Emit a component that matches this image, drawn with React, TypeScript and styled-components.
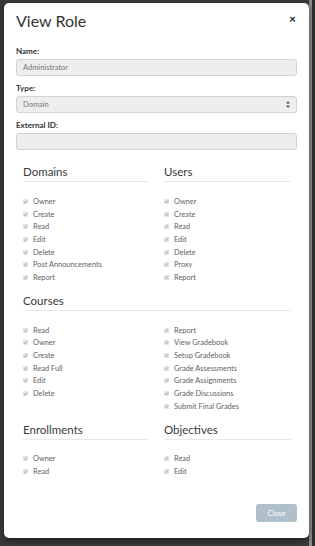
import React from "react";
import styled, { createGlobalStyle } from "styled-components";

const Global = createGlobalStyle`
  html, body { margin: 0; padding: 0; }
  body {
    background: #3a3a3a;
    font-family: Lato, "Noto Sans", sans-serif;
    width: 315px;
    height: 546px;
    overflow: hidden;
  }
`;

const Backdrop = styled.div`
  position: relative;
  width: 315px;
  height: 546px;
  box-sizing: border-box;
  padding: 3px 0 0 4px;
  background: linear-gradient(to right, #3a3a3a 0, #3a3a3a 309px, #8a8a92 309px, #8a8a92 312px, #2f2f2f 312px);
`;

const Modal = styled.div`
  width: 305px;
  height: 535px;
  box-sizing: border-box;
  background: #fff;
  border-radius: 5px;
  padding: 0 12px 16px;
  display: flex;
  flex-direction: column;
  box-shadow: 0 2px 6px rgba(0, 0, 0, 0.5);
`;

const Header = styled.div`
  display: flex;
  justify-content: space-between;
  align-items: flex-start;
  padding-top: 8px;
`;

const Title = styled.h1`
  margin: 0;
  font-size: 16px;
  line-height: 20px;
  font-weight: 400;
  color: #333;
`;

const CloseX = styled.span`
  font-size: 12px;
  font-weight: 900;
  color: #333;
  line-height: 12px;
  margin-top: 2px;
  margin-right: 1px;
`;

const Field = styled.div<{ $first?: boolean }>`
  display: flex;
  flex-direction: column;
  margin-top: ${(p) => (p.$first ? "15px" : "7px")};
`;

const Label = styled.label`
  font-size: 8px;
  line-height: 10px;
  font-weight: 700;
  color: #333;
  margin-bottom: 3px;
`;

const Input = styled.div`
  height: 17px;
  box-sizing: border-box;
  border: 1px solid #d3d3d3;
  border-radius: 3px;
  background: #eee;
  color: #777;
  font-size: 7.5px;
  line-height: 15px;
  padding: 0 6px;
  display: flex;
  align-items: center;
  justify-content: space-between;
`;

const Arrows = styled.svg`
  width: 4px;
  height: 7px;
`;

const Perms = styled.div`
  padding: 0 6px 0 7px;
  margin-top: 5px;
`;

const Grid = styled.div`
  display: grid;
  grid-template-columns: 126px 127px;
  column-gap: 15px;
`;

const Section = styled.div`
  margin-top: 10px;
`;

const Heading = styled.h2`
  margin: 0;
  font-size: 11.5px;
  line-height: 14px;
  font-weight: 400;
  color: #3a3a3a;
  padding-bottom: 2px;
  border-bottom: 1px solid #e8e8e8;
  margin-bottom: 13px;
`;

const List = styled.div`
  display: flex;
  flex-direction: column;
`;

const Item = styled.div`
  display: flex;
  align-items: center;
  height: 12.7px;
  font-size: 7.4px;
  color: #5f5f5f;
`;

const Box = styled.span`
  width: 5px;
  height: 5px;
  background: #e2e2e2;
  border-radius: 1px;
  margin-right: 5px;
  display: inline-flex;
  align-items: center;
  justify-content: center;
`;

const Footer = styled.div`
  margin-top: auto;
  display: flex;
  justify-content: flex-end;
`;

const Button = styled.button`
  width: 41px;
  height: 18px;
  border: none;
  border-radius: 3px;
  background: #afc0ca;
  color: #fff;
  font-family: Lato, "Noto Sans", sans-serif;
  font-size: 7.5px;
  font-weight: 400;
  padding: 0;
`;

const Check = ({ label }: { label: string }) => (
  <Item>
    <Box>
      <svg width="5" height="5" viewBox="0 0 10 10">
        <path d="M2 5.5 L4 7.5 L8 2.5" stroke="#9a9a9a" strokeWidth="1.6" fill="none" />
      </svg>
    </Box>
    {label}
  </Item>
);

const CheckList = ({ items }: { items: string[] }) => (
  <List>
    {items.map((i) => (
      <Check key={i} label={i} />
    ))}
  </List>
);

export default function App() {
  return (
    <>
      <Global />
      <Backdrop>
        <Modal>
          <Header>
            <Title>View Role</Title>
            <CloseX>×</CloseX>
          </Header>
          <Field $first>
            <Label>Name:</Label>
            <Input>Administrator</Input>
          </Field>
          <Field>
            <Label>Type:</Label>
            <Input>
              Domain
              <Arrows viewBox="0 0 4 7">
                <path d="M2 0 L4 2.5 L0 2.5 Z M2 7 L4 4.5 L0 4.5 Z" fill="#555" />
              </Arrows>
            </Input>
          </Field>
          <Field>
            <Label>External ID:</Label>
            <Input />
          </Field>
          <Perms>
            <Grid>
              <Section>
                <Heading>Domains</Heading>
                <CheckList items={["Owner", "Create", "Read", "Edit", "Delete", "Post Announcements", "Report"]} />
              </Section>
              <Section>
                <Heading>Users</Heading>
                <CheckList items={["Owner", "Create", "Read", "Edit", "Delete", "Proxy", "Report"]} />
              </Section>
            </Grid>
            <Section>
              <Heading>Courses</Heading>
              <Grid>
                <CheckList items={["Read", "Owner", "Create", "Read Full", "Edit", "Delete"]} />
                <CheckList
                  items={[
                    "Report",
                    "View Gradebook",
                    "Setup Gradebook",
                    "Grade Assessments",
                    "Grade Assignments",
                    "Grade Discussions",
                    "Submit Final Grades",
                  ]}
                />
              </Grid>
            </Section>
            <Grid>
              <Section>
                <Heading>Enrollments</Heading>
                <CheckList items={["Owner", "Read"]} />
              </Section>
              <Section>
                <Heading>Objectives</Heading>
                <CheckList items={["Read", "Edit"]} />
              </Section>
            </Grid>
          </Perms>
          <Footer>
            <Button>Close</Button>
          </Footer>
        </Modal>
      </Backdrop>
    </>
  );
}
